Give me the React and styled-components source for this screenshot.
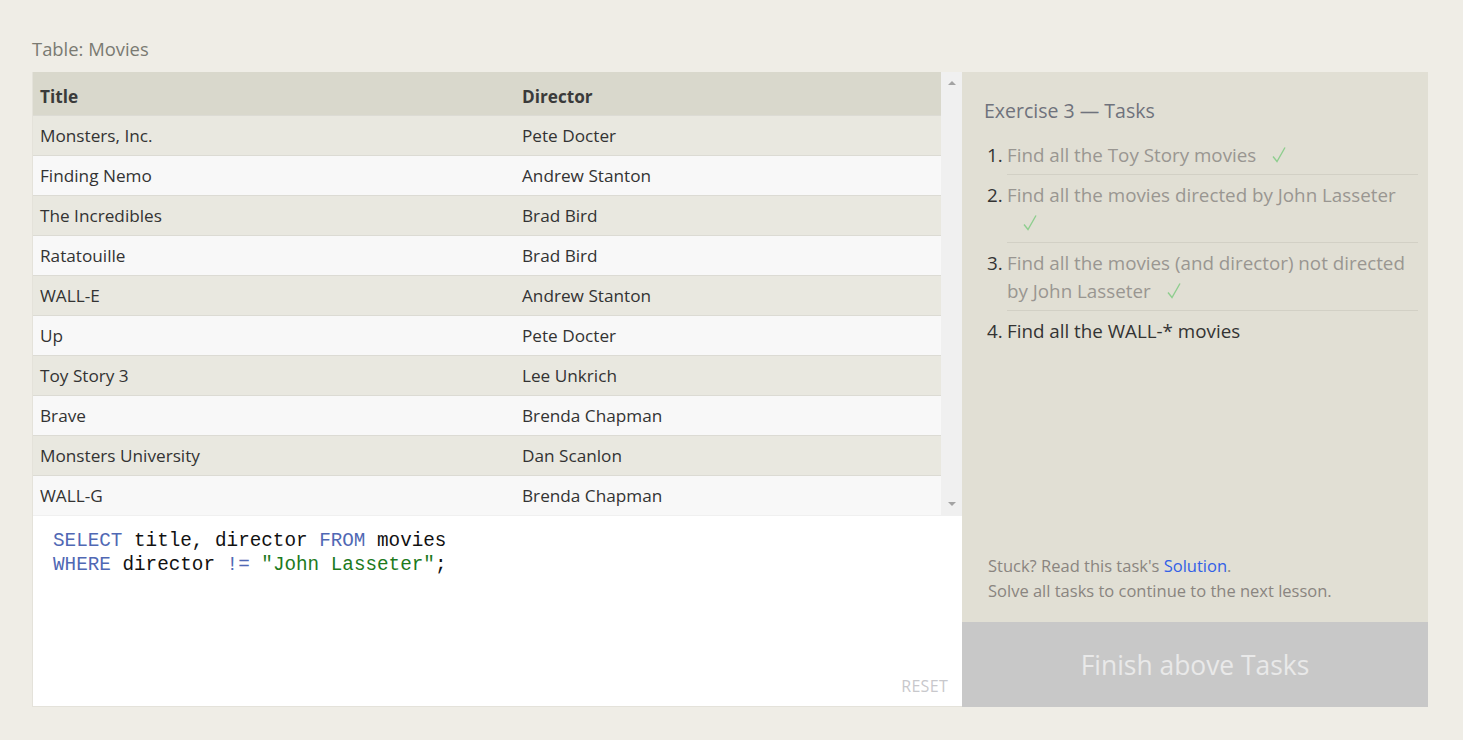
import React from "react";
import styled, { createGlobalStyle } from "styled-components";

const GlobalStyle = createGlobalStyle`
  html, body {
    margin: 0;
    padding: 0;
    background: #efede6;
    font-family: "Open Sans", "Noto Sans", sans-serif;
  }
`;

const Page = styled.div`
  padding: 36px 0 0 32px;
  width: 1396px;
`;

const TableLabel = styled.div`
  font-size: 18.4px;
  line-height: 26px;
  color: #7a7a72;
  margin-bottom: 10px;
`;

const Workspace = styled.div`
  display: flex;
  height: 635px;
`;

const LeftPanel = styled.div`
  width: 929px;
  display: flex;
  flex-direction: column;
  border: 1px solid #e4e2da;
  border-right: none;
  border-top: none;
  background: #fff;
`;

const TableArea = styled.div`
  display: flex;
  height: 444px;
  background: #f0f0f0;
`;

const Table = styled.div`
  width: 908px;
  display: flex;
  flex-direction: column;
`;

const Row = styled.div`
  display: grid;
  grid-template-columns: 482px 1fr;
  height: ${(p) => (p.$head ? 43 : 40)}px;
  flex-shrink: 0;
  box-sizing: border-box;
  padding-top: ${(p) => (p.$head ? 5 : 0)}px;
  align-items: center;
  background: ${(p) => (p.$head ? "#d9d8cc" : p.$odd ? "#e9e8e0" : "#f8f8f8")};
  border-top: ${(p) => (p.$head ? "none" : "1px solid #dcdbd4")};
  font-size: 17.2px;
  font-weight: ${(p) => (p.$head ? 700 : 400)};
  color: ${(p) => (p.$head ? "#3a3a3a" : "#333")};
`;

const Cell = styled.div`
  padding-left: 7px;
  white-space: nowrap;
`;

const ScrollBar = styled.div`
  width: 21px;
  display: flex;
  flex-direction: column;
  justify-content: space-between;
  align-items: center;
  padding: 9px 0 10px;
  background: #f0f0f0;
`;

const Arrow = styled.div`
  width: 0;
  height: 0;
  border-left: 4.5px solid transparent;
  border-right: 4.5px solid transparent;
  ${(p) =>
    p.$down
      ? "border-top: 4px solid #a3a3a3;"
      : "border-bottom: 4px solid #a3a3a3;"}
`;

const Editor = styled.div`
  flex: 1;
  display: flex;
  flex-direction: column;
  padding: 13px 14px 9px 20px;
  background: #fff;
`;

const Code = styled.pre`
  margin: 0;
  font-family: "Liberation Mono", "DejaVu Sans Mono", monospace;
  font-size: 19.3px;
  line-height: 24px;
  color: #111;
`;

const Kw = styled.span`
  color: #5068b4;
`;

const Str = styled.span`
  color: #1d7a1d;
`;

const Reset = styled.div`
  margin-top: auto;
  align-self: flex-end;
  font-size: 16px;
  color: #c8c8cc;
  letter-spacing: 0.3px;
`;

const RightPanel = styled.div`
  width: 466px;
  display: flex;
  flex-direction: column;
  background: #e1dfd4;
`;

const TaskBox = styled.div`
  flex: 1;
  padding: 25px 10px 0 22px;
  display: flex;
  flex-direction: column;
`;

const Heading = styled.div`
  font-size: 19.5px;
  line-height: 28px;
  color: #6f727c;
  margin-bottom: 10px;
`;

const Task = styled.div`
  display: flex;
  font-size: 18.8px;
  line-height: 28px;
`;

const TaskNum = styled.div`
  width: 23px;
  text-align: left;
  padding: 6px 0 0 3px;
  box-sizing: border-box;
  color: #333;
`;

const TaskText = styled.div`
  flex: 1;
  padding: 6px 0 5px;
  color: ${(p) => (p.$done ? "#999691" : "#333")};
  border-bottom: ${(p) => (p.$last ? "none" : "1px solid #d2d0c5")};
`;

const Check = styled.svg`
  display: inline-block;
  margin-left: 16px;
  vertical-align: -2px;
`;

const Help = styled.div`
  margin-top: auto;
  padding: 0 0 19px 4px;
  font-size: 16.5px;
  line-height: 25px;
  color: #8a8580;
`;

const SolutionLink = styled.a`
  color: #3260e6;
  text-decoration: none;
`;

const FinishButton = styled.div`
  height: 85px;
  display: flex;
  align-items: center;
  justify-content: center;
  background: #c8c8c8;
  color: #e9e9e9;
  font-size: 26.4px;
`;

const movies = [
  ["Monsters, Inc.", "Pete Docter"],
  ["Finding Nemo", "Andrew Stanton"],
  ["The Incredibles", "Brad Bird"],
  ["Ratatouille", "Brad Bird"],
  ["WALL-E", "Andrew Stanton"],
  ["Up", "Pete Docter"],
  ["Toy Story 3", "Lee Unkrich"],
  ["Brave", "Brenda Chapman"],
  ["Monsters University", "Dan Scanlon"],
  ["WALL-G", "Brenda Chapman"],
];

const tasks = [
  { text: "Find all the Toy Story movies", done: true },
  { text: "Find all the movies directed by John Lasseter", done: true },
  { text: "Find all the movies (and director) not directed by John Lasseter", done: true },
  { text: "Find all the WALL-* movies", done: false },
];

const CheckMark = () => (
  <Check width="14" height="18" viewBox="0 0 14 18">
    <path d="M1 10.5 L5 15.5 L13 1.5" fill="none" stroke="#8fce8f" strokeWidth="1.4" />
  </Check>
);

const App = () => {
  return (
    <>
      <GlobalStyle />
      <Page>
        <TableLabel>Table: Movies</TableLabel>
        <Workspace>
          <LeftPanel>
            <TableArea>
              <Table>
                <Row $head>
                  <Cell>Title</Cell>
                  <Cell>Director</Cell>
                </Row>
                {movies.map((m, i) => (
                  <Row key={i} $odd={i % 2 === 0}>
                    <Cell>{m[0]}</Cell>
                    <Cell>{m[1]}</Cell>
                  </Row>
                ))}
              </Table>
              <ScrollBar>
                <Arrow />
                <Arrow $down />
              </ScrollBar>
            </TableArea>
            <Editor>
              <Code>
                <Kw>SELECT</Kw> title, director <Kw>FROM</Kw> movies{"\n"}
                <Kw>WHERE</Kw> director <Kw>!=</Kw> <Str>"John Lasseter"</Str>;
              </Code>
              <Reset>RESET</Reset>
            </Editor>
          </LeftPanel>
          <RightPanel>
            <TaskBox>
              <Heading>Exercise 3 — Tasks</Heading>
              {tasks.map((t, i) => (
                <Task key={i}>
                  <TaskNum>{i + 1}.</TaskNum>
                  <TaskText $done={t.done} $last={i === tasks.length - 1}>
                    {t.text}
                    {t.done && <CheckMark />}
                  </TaskText>
                </Task>
              ))}
              <Help>
                Stuck? Read this task's <SolutionLink href="#">Solution</SolutionLink>.
                <br />
                Solve all tasks to continue to the next lesson.
              </Help>
            </TaskBox>
            <FinishButton>Finish above Tasks</FinishButton>
          </RightPanel>
        </Workspace>
      </Page>
    </>
  );
};

export default App;
